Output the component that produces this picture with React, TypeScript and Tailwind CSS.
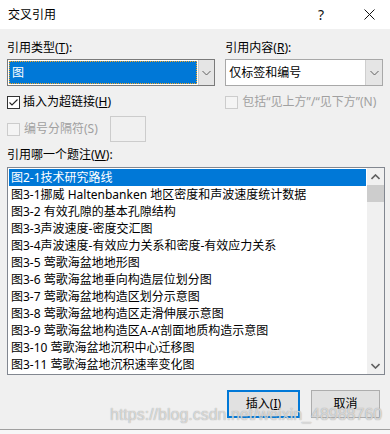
import React from 'react';

const items = [
  '图2-1技术研究路线',
  '图3-1挪威 Haltenbanken 地区密度和声波速度统计数据',
  '图3-2 有效孔隙的基本孔隙结构',
  '图3-3声波速度-密度交汇图',
  '图3-4声波速度-有效应力关系和密度-有效应力关系',
  '图3-5 莺歌海盆地地形图',
  '图3-6 莺歌海盆地垂向构造层位划分图',
  '图3-7 莺歌海盆地构造区划分示意图',
  '图3-8 莺歌海盆地构造区走滑伸展示意图',
  '图3-9 莺歌海盆地构造区A-A’剖面地质构造示意图',
  '图3-10 莺歌海盆地沉积中心迁移图',
  '图3-11 莺歌海盆地沉积速率变化图',
];

function Chevron({ up = false }: { up?: boolean }) {
  return (
    <svg width="9" height="6" viewBox="0 0 9 6">
      <path
        d={up ? 'M0.5 5 L4.5 1 L8.5 5' : 'M0.5 1 L4.5 5 L8.5 1'}
        fill="none"
        stroke="#606060"
        strokeWidth={up ? 1.6 : 1}
      />
    </svg>
  );
}

function Check() {
  return (
    <div className="w-[13px] h-[13px] border border-[#333] bg-white flex items-center justify-center">
      <svg width="11" height="11" viewBox="0 0 11 11">
        <path d="M1.5 5.5 L4 8 L9.5 2.5" fill="none" stroke="#222" strokeWidth="1.1" />
      </svg>
    </div>
  );
}

function Box() {
  return <div className="w-[13px] h-[13px] border border-[#cccccc] bg-[#f4f4f4]" />;
}

export default function App() {
  return (
    <div
      className="relative w-[390px] h-[434px] bg-[#f0f0f0] text-[12px] leading-[16px] text-black overflow-hidden flex flex-col"
      style={{ fontFamily: '"Noto Sans", "Noto Sans CJK SC", sans-serif' }}
    >
      {/* title bar */}
      <div className="h-[29px] bg-white flex items-center pl-[8px] pr-[15px] shrink-0">
        <span className="flex-1 text-[12px]">交叉引用</span>
        <span className="text-[14px] w-[10px] mr-[36px] text-[#111]">?</span>
        <svg width="11" height="11" viewBox="0 0 11 11">
          <path d="M0.5 0.5 L10.5 10.5 M10.5 0.5 L0.5 10.5" stroke="#111" strokeWidth="1" />
        </svg>
      </div>

      <div className="flex-1 flex flex-col px-[7px] pt-[11px]">
        {/* top two columns */}
        <div className="flex gap-[10px]">
          <div className="w-[210px] flex flex-col">
            <div className="h-[16px]">
              引用类型(<span className="underline">T</span>):
            </div>
            <div className="mt-[3px] h-[27px] border border-[#7a7a7a] bg-white flex">
              <div className="flex-1 p-[1px]">
                <div className="h-full bg-[#0078d7] border border-dotted border-[#f5a623] text-white flex items-center pl-[2px]">
                  图
                </div>
              </div>
              <div className="w-[16px] bg-[#e5e5e5] border-l border-[#cfcfcf] flex items-center justify-center">
                <Chevron />
              </div>
            </div>
            <div className="mt-[8px] h-[16px] flex items-center gap-[3px]">
              <Check />
              <span>
                插入为超链接(<span className="underline">H</span>)
              </span>
            </div>
          </div>
          <div className="w-[159px] flex flex-col">
            <div className="h-[16px]">
              引用内容(<span className="underline">R</span>):
            </div>
            <div className="mt-[3px] h-[27px] border border-[#a8a8a8] bg-white flex">
              <div className="flex-1 flex items-center pl-[3px]">仅标签和编号</div>
              <div className="w-[17px] bg-[#e5e5e5] border-l border-[#cfcfcf] flex items-center justify-center">
                <Chevron />
              </div>
            </div>
            <div className="mt-[8px] h-[16px] flex items-center gap-[4px] text-[#a0a0a0]">
              <Box />
              <span>包括“见上方”/“见下方”(N)</span>
            </div>
          </div>
        </div>

        {/* separator row */}
        <div className="mt-[6px] h-[26px] flex items-center">
          <Box />
          <span className="ml-[4px] text-[#a0a0a0]">编号分隔符(S)</span>
          <div className="ml-[12px] w-[36px] h-[26px] border border-[#cccccc] bg-[#f0f0f0]" />
        </div>

        <div className="mt-[5px] h-[16px]">
          引用哪一个题注(<span className="underline">W</span>):
        </div>

        {/* list */}
        <div className="mt-[4px] w-[378px] h-[208px] border border-[#828790] bg-white flex">
          <div className="flex-1 p-[1px] flex flex-col">
            {items.map((it, i) => (
              <div
                key={i}
                className={
                  i === 0
                    ? 'h-[17px] shrink-0 bg-[#0078d7] text-white pl-[2px] leading-[17px] whitespace-nowrap'
                    : 'h-[17px] shrink-0 pl-[2px] leading-[17px] whitespace-nowrap'
                }
              >
                {it}
              </div>
            ))}
          </div>
          <div className="w-[17px] bg-[#f0f0f0] flex flex-col">
            <div className="h-[17px] flex items-center justify-center">
              <Chevron up />
            </div>
            <div className="h-[17px] bg-[#cdcdcd]" />
            <div className="flex-1" />
            <div className="h-[17px] flex items-center justify-center">
              <svg width="9" height="6" viewBox="0 0 9 6">
                <path d="M0.5 1 L4.5 5 L8.5 1" fill="none" stroke="#606060" strokeWidth="1.6" />
              </svg>
            </div>
          </div>
        </div>

        {/* buttons */}
        <div className="mt-[15px] flex justify-end gap-[11px] pr-[3px]">
          <div className="w-[73px] h-[28px] border-2 border-[#0078d7] bg-[#e1e1e1] flex items-center justify-center">
            插入(<span className="underline">I</span>)
          </div>
          <div className="w-[69px] h-[28px] border border-[#adadad] bg-[#e1e1e1] flex items-center justify-center">
            取消
          </div>
        </div>
      </div>

      <div className="h-[5px] border-t border-[#a0a0a0] bg-[#f7f7f7] shrink-0" />

      {/* watermark */}
      <div
        className="absolute left-[110px] top-[405px] text-[16px] leading-[20px] text-white/60 [text-shadow:0_0_1px_#8a8a8a] whitespace-nowrap pointer-events-none"
        style={{ fontFamily: '"Liberation Sans", sans-serif' }}
      >
        https://blog.csdn.net/weixin_48988760
      </div>
    </div>
  );
}
